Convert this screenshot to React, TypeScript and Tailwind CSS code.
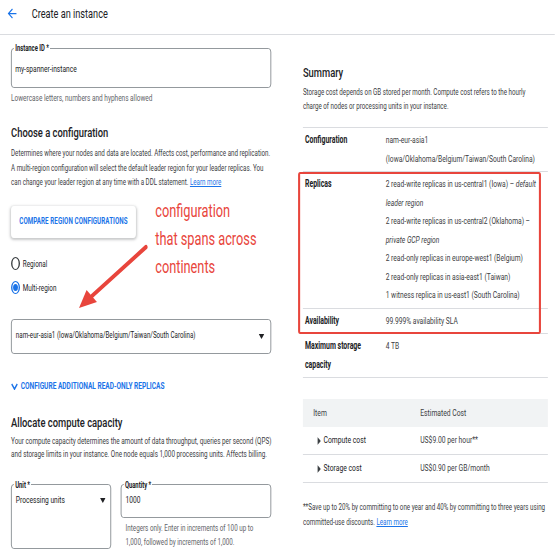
import React from "react";

function Outlined({
  label,
  className,
  children,
}: {
  label: string;
  className?: string;
  children: React.ReactNode;
}) {
  return (
    <fieldset
      className={`rounded-[4px] border-y border-x-[1.4px] border-[#80868b] ${className ?? ""}`}
    >
      <legend className="ml-[3px] px-[2px] text-[8.5px] font-bold leading-[8px] text-[#202124]">
        {label}
      </legend>
      {children}
    </fieldset>
  );
}

function Radio({ checked }: { checked: boolean }) {
  return (
    <span
      className={
        checked
          ? "flex h-[13px] w-[13px] items-center justify-center rounded-full border-y-[1.5px] border-x-[2px] border-[#1a73e8]"
          : "flex h-[13px] w-[13px] items-center justify-center rounded-full border-y-[1.5px] border-x-[2px] border-[#3c4043]"
      }
    >
      {checked && <span className="h-[6.5px] w-[6.5px] rounded-full bg-[#1a73e8]" />}
    </span>
  );
}

function DownTriangle() {
  return (
    <svg viewBox="0 0 8 5" className="h-[5px] w-[8px]">
      <path d="M0 0 L8 0 L4 5 Z" fill="#202124" />
    </svg>
  );
}

function RightTriangle() {
  return (
    <svg viewBox="0 0 5 8" className="h-[8px] w-[5px]">
      <path d="M0 0 L5 4 L0 8 Z" fill="#3c4043" />
    </svg>
  );
}

function Row({
  label,
  children,
}: {
  label: React.ReactNode;
  children: React.ReactNode;
}) {
  return (
    <div className="grid grid-cols-[120px_1fr] border-b border-[#dadce0] pt-[3px] pb-[3px] leading-[18.5px]">
      <div className="pl-[3px] text-[10px] font-bold text-[#202124]">{label}</div>
      <div className="whitespace-nowrap text-[9.7px] text-[#3c4043]">{children}</div>
    </div>
  );
}

export default function App() {
  return (
    <div className="h-[555px] w-[555px] overflow-hidden bg-white">
      <div className="relative w-[804px] origin-top-left scale-x-[0.69] font-['Roboto',sans-serif] text-[#202124]">
        {/* Header */}
        <header className="h-[35px] border-b border-[#dadce0]">
          <div className="flex h-[27px] items-center pl-[8px]">
            <svg
              viewBox="0 0 24 24"
              preserveAspectRatio="none"
              className="h-[15px] w-[19px]"
            >
              <path
                fill="#1a73e8"
                d="M20 11H7.83l5.59-5.59L12 4l-8 8 8 8 1.41-1.41L7.83 13H20v-2z"
              />
            </svg>
            <h1 className="ml-[19px] text-[13.3px] leading-[20px] text-[#202124]">
              Create an instance
            </h1>
          </div>
        </header>

        <div className="flex">
          {/* Left column */}
          <div className="w-[393px] pl-[16px]">
            <Outlined label="Instance ID *" className="mt-[9px]">
              <div className="flex h-[35px] items-center pl-[5px] text-[9.6px] text-[#202124]">
                my-spanner-instance
              </div>
            </Outlined>
            <p className="mt-[4px] text-[9.4px] leading-[12px] text-[#5f6368]">
              Lowercase letters, numbers and hyphens allowed
            </p>

            <h2 className="mt-[18px] text-[13.6px] font-medium leading-[20px] text-[#202124]">
              Choose a configuration
            </h2>
            <p className="mt-[4px] whitespace-nowrap text-[9px] leading-[14.5px] text-[#3c4043]">
              Determines where your nodes and data are located. Affects cost, performance and
              replication.
              <br />
              A multi-region configuration will select the default leader region for your leader
              replicas. You
              <br />
              can change your leader region at any time with a DDL statement.{" "}
              <span className="text-[#1a73e8] underline">Learn more</span>
            </p>

            <button className="mt-[16px] flex h-[32px] w-[181px] items-center justify-center rounded-[4px] bg-white text-[9px] font-bold tracking-[0.1px] text-[#1a73e8] shadow-[0_1px_3px_1px_rgba(60,64,67,0.28)]">
              COMPARE REGION CONFIGURATIONS
            </button>

            <div className="mt-[16px] flex h-[20px] items-center gap-[4px] text-[9.2px] text-[#202124]">
              <Radio checked={false} />
              <span>Regional</span>
            </div>
            <div className="mt-[4px] flex h-[20px] items-center gap-[4px] text-[9.2px] text-[#202124]">
              <Radio checked={true} />
              <span>Multi-region</span>
            </div>

            <div className="mt-[21px] flex h-[35px] items-center justify-between rounded-[4px] border-y border-x-[1.4px] border-[#80868b] pl-[6px] pr-[9px] text-[9px] text-[#202124]">
              <span>nam-eur-asia1 (Iowa/Oklahoma/Belgium/Taiwan/South Carolina)</span>
              <DownTriangle />
            </div>

            <div className="mt-[26px] flex h-[14px] items-center gap-[4px] text-[9.5px] font-bold text-[#1a73e8]">
              <svg viewBox="0 0 10 7" className="h-[7px] w-[10px]">
                <path d="M1 1 L5 6 L9 1" fill="none" stroke="#1a73e8" strokeWidth="2" />
              </svg>
              <span>CONFIGURE ADDITIONAL READ-ONLY REPLICAS</span>
            </div>

            <h2 className="mt-[18px] text-[13.6px] font-medium leading-[20px] text-[#202124]">
              Allocate compute capacity
            </h2>
            <p className="mt-[2px] whitespace-nowrap text-[9.2px] leading-[13.5px] text-[#3c4043]">
              Your compute capacity determines the amount of data throughput, queries per second
              (QPS)
              <br />
              and storage limits in your instance. One node equals 1,000 processing units. Affects
              billing.
            </p>

            <div className="mt-[20px] flex gap-[14px]">
              <Outlined label="Unit *" className="w-[145px]">
                <div className="flex h-[28px] items-center justify-between pb-[4px] pl-[6px] pr-[7px] text-[9.6px] text-[#202124]">
                  <span>Processing units</span>
                  <DownTriangle />
                </div>
              </Outlined>
              <div className="flex-1">
                <Outlined label="Quantity *">
                  <div className="flex h-[28px] items-center pb-[4px] pl-[6px] text-[9.6px] text-[#202124]">
                    1000
                  </div>
                </Outlined>
                <p className="mt-[3px] whitespace-nowrap pl-[7px] text-[9.1px] leading-[14px] text-[#5f6368]">
                  Integers only. Enter in increments of 100 up to
                  <br />
                  1,000, followed by increments of 1,000.
                </p>
              </div>
            </div>
          </div>

          {/* Right column */}
          <div className="ml-[46px] w-[355px]">
            <h2 className="mt-[27px] text-[13.6px] font-medium leading-[20px] text-[#202124]">
              Summary
            </h2>
            <p className="mt-[4px] whitespace-nowrap text-[9px] leading-[13.5px] text-[#3c4043]">
              Storage cost depends on GB stored per month. Compute cost refers to the hourly
              <br />
              charge of nodes or processing units in your instance.
            </p>

            <div className="mt-[14px] border-t border-[#dadce0]">
              <Row label="Configuration">
                nam-eur-asia1
                <br />
                (Iowa/Oklahoma/Belgium/Taiwan/South Carolina)
              </Row>
              <div className="relative">
                <Row label="Replicas">
                  2 read-write replicas in us-central1 (Iowa) – <i>default</i>
                  <br />
                  <i>leader region</i>
                  <br />
                  2 read-write replicas in us-central2 (Oklahoma) –
                  <br />
                  <i>private GCP region</i>
                  <br />
                  2 read-only replicas in europe-west1 (Belgium)
                  <br />
                  2 read-only replicas in asia-east1 (Taiwan)
                  <br />
                  1 witness replica in us-east1 (South Carolina)
                </Row>
                <Row label="Availability">99.999% availability SLA</Row>
                <div className="pointer-events-none absolute -left-[7px] right-[10px] top-0 bottom-0 rounded-[3px] border-y-2 border-x-[3px] border-[#e8453c]" />
              </div>
              <Row
                label={
                  <>
                    Maximum storage
                    <br />
                    capacity
                  </>
                }
              >
                4 TB
              </Row>
            </div>

            <div className="mt-[21px] text-[9.8px] text-[#3c4043]">
              <div className="grid h-[28px] grid-cols-[170px_1fr] items-center bg-[#f1f3f4]">
                <span className="pl-[15px]">Item</span>
                <span>Estimated Cost</span>
              </div>
              <div className="grid h-[28px] grid-cols-[170px_1fr] items-center border-b border-[#dadce0]">
                <span className="flex items-center gap-[4px] pl-[21px] text-[#202124]">
                  <RightTriangle />
                  Compute cost
                </span>
                <span>US$9.00 per hour**</span>
              </div>
              <div className="grid h-[28px] grid-cols-[170px_1fr] items-center border-b border-[#dadce0]">
                <span className="flex items-center gap-[4px] pl-[21px] text-[#202124]">
                  <RightTriangle />
                  Storage cost
                </span>
                <span>US$0.90 per GB/month</span>
              </div>
            </div>

            <p className="mt-[17px] whitespace-nowrap text-[9px] leading-[15px] text-[#3c4043]">
              **Save up to 20% by committing to one year and 40% by committing to three years using
              <br />
              committed-use discounts. <span className="text-[#1a73e8] underline">Learn more</span>
            </p>
          </div>
        </div>

        {/* Annotation: red text */}
        <div className="pointer-events-none absolute left-[225px] top-[197px] whitespace-nowrap text-[18.5px] leading-[28px] text-[#e8453c]">
          configuration
          <br />
          that spans across
          <br />
          continents
        </div>

        {/* Annotation: red arrow */}
        <svg
          viewBox="0 0 120 75"
          className="pointer-events-none absolute left-[100px] top-[240px] h-[75px] w-[120px]"
        >
          <path d="M111.6 7 L33.1 56.2" stroke="#e8453c" strokeWidth="4.5" strokeLinecap="round" />
          <path d="M14.5 68 L40.5 62 L25.5 50 Z" fill="#e8453c" />
        </svg>
      </div>
    </div>
  );
}
